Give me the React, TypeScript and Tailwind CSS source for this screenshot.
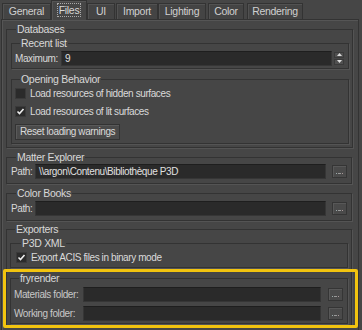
import React from 'react'

const font = { fontFamily: '"Liberation Sans", Arial, sans-serif' }

function Group({ title, className = '', children }: { title: string; className?: string; children?: React.ReactNode }) {
  return (
    <fieldset className={`border border-[#333] shadow-[1px_1px_0_#545454] ${className}`}>
      <legend className="ml-[5px] px-[1px] text-[10.5px] tracking-[-0.3px] leading-[12px] text-[#d8d8d8]">{title}</legend>
      {children}
    </fieldset>
  )
}

function Check({ checked, label }: { checked?: boolean; label: string }) {
  return (
    <div className="flex items-center h-[11px]">
      <div className="w-[11px] h-[11px] bg-[#2b2b2b] border border-[#3a3a3a] flex items-center justify-center">
        {checked && (
          <svg width="9" height="9" viewBox="0 0 9 9">
            <path d="M1.5 4.5 L3.5 6.5 L7.5 2" stroke="#eee" strokeWidth="1.6" fill="none" />
          </svg>
        )}
      </div>
      <span className="ml-[4px] whitespace-nowrap text-[#dadada]">{label}</span>
    </div>
  )
}

function Dots() {
  return (
    <div className="justify-self-end w-[15px] h-[13px] border border-[#353535] bg-[#4a4a4a] shadow-[inset_1px_1px_0_#585858] flex items-end justify-center pb-[3px] gap-[1px]">
      <span className="w-[1px] h-[1px] bg-[#9aa]" />
      <span className="w-[3px] h-[1px] bg-[#999]" />
      <span className="w-[1px] h-[1px] bg-[#a99]" />
    </div>
  )
}

function Field({ value = '' }: { value?: string }) {
  return (
    <div className="h-[15px] bg-[#2a2a2a] border border-[#363636] border-t-[#1e1e1e] leading-[13px] pl-[3px] text-[#e0e0e0] whitespace-nowrap overflow-hidden">
      {value}
    </div>
  )
}

const tabs = [
  { name: 'General', w: 'w-[49px]', ml: 'ml-[2px]' },
  { name: 'Files', w: 'w-[36px]', ml: 'ml-0' },
  { name: 'UI', w: 'w-[28px]', ml: 'ml-0' },
  { name: 'Import', w: 'w-[42px]', ml: 'ml-[1px]' },
  { name: 'Lighting', w: 'w-[48px]', ml: 'ml-0' },
  { name: 'Color', w: 'w-[36px]', ml: 'ml-[2px]' },
  { name: 'Rendering', w: 'w-[56px]', ml: 'ml-[3px]' },
]

export default function App() {
  return (
    <div className="relative w-[362px] h-[330px] overflow-hidden bg-[#464646] text-[#d8d8d8] text-[10px] tracking-[-0.4px]" style={font}>
      <div className="flex items-end h-[19px] text-[10.5px] tracking-[-0.3px]">
        {tabs.map((t) =>
          t.name === 'Files' ? (
            <div key={t.name} className={`${t.w} ${t.ml} relative z-10 h-[20px] -mb-[1px] bg-[#464646] border border-b-0 border-[#333] shadow-[inset_1px_1px_0_#555] flex items-start justify-center pt-[3px]`}>
              <span className="outline-1 outline-dotted outline-[#aaa] leading-[12px] px-[1px]">Files</span>
            </div>
          ) : (
            <div key={t.name} className={`${t.w} ${t.ml} h-[16px] bg-[#444] border border-b-0 border-[#333] shadow-[inset_1px_1px_0_#525252] flex items-center justify-center text-[#d0d0d0]`}>
              {t.name}
            </div>
          )
        )}
      </div>

      <div className="ml-[1px] w-[358px] h-[320px] border border-[#333] shadow-[inset_1px_1px_0_#555] pl-[4px]">
        <Group title="Databases" className="mt-[3px] w-[346px] h-[125px] pl-[4px] pr-[3px]">
          <Group title="Recent list" className="mt-[2px] h-[32px] pl-[3px] pr-[4px]">
            <div className="mt-[2px] grid grid-cols-[46px_271px_12px] items-center">
              <span className="whitespace-nowrap">Maximum:</span>
              <Field value="9" />
              <div className="justify-self-end w-[10px] h-[14px] flex flex-col gap-[1px]">
                <div className="h-[6px] bg-[#505050] border border-[#3a3a3a] flex items-center justify-center">
                  <svg width="5" height="3" viewBox="0 0 5 3"><path d="M0 3 L2.5 0 L5 3Z" fill="#ddd" /></svg>
                </div>
                <div className="h-[6px] bg-[#505050] border border-[#3a3a3a] flex items-center justify-center">
                  <svg width="5" height="3" viewBox="0 0 5 3"><path d="M0 0 L2.5 3 L5 0Z" fill="#ddd" /></svg>
                </div>
              </div>
            </div>
          </Group>
          <Group title="Opening Behavior" className="mt-[4px] h-[71px] pl-[3px]">
            <div className="mt-[3px] flex flex-col gap-[7px]">
              <Check label="Load resources of hidden surfaces" />
              <Check checked label="Load resources of lit surfaces" />
            </div>
            <button className="mt-[7px] h-[16px] px-[4px] border border-[#333] bg-[#4a4a4a] shadow-[inset_1px_1px_0_#5a5a5a] leading-[12px] text-[#dadada]">
              Reset loading warnings
            </button>
          </Group>
        </Group>

        <Group title="Matter Explorer" className="mt-[3px] w-[346px] h-[33px] pl-[4px]">
          <div className="mt-[1px] grid grid-cols-[24px_291px_21px] items-center">
            <span>Path:</span>
            <Field value={'\\\\argon\\Contenu\\Bibliothèque P3D'} />
            <Dots />
          </div>
        </Group>

        <Group title="Color Books" className="mt-[3px] w-[346px] h-[34px] pl-[4px]">
          <div className="mt-[2px] grid grid-cols-[24px_291px_21px] items-center">
            <span>Path:</span>
            <Field />
            <Dots />
          </div>
        </Group>

        <Group title="Exporters" className="mt-[2px] w-[346px] h-[103px] pl-[3px] pr-[3px]">
          <Group title="P3D XML" className="mt-[2px] h-[31px] pl-[5px]">
            <div className="mt-[3px]">
              <Check checked label="Export ACIS files in binary mode" />
            </div>
          </Group>
          <Group title="fryrender" className="mt-[4px] h-[52px] pl-[3px]">
            <div className="mt-[3px] grid grid-cols-[69px_238px_22px] gap-y-[4px] items-center text-[#c8c8c8]">
              <span className="whitespace-nowrap">Materials folder:</span>
              <Field />
              <Dots />
              <span className="whitespace-nowrap">Working folder:</span>
              <Field />
              <Dots />
            </div>
          </Group>
        </Group>
      </div>

      <div className="absolute left-[3px] top-[269px] w-[355px] h-[59px] border-[3px] border-[#f2c40f] rounded-[2px] pointer-events-none" />
    </div>
  )
}
